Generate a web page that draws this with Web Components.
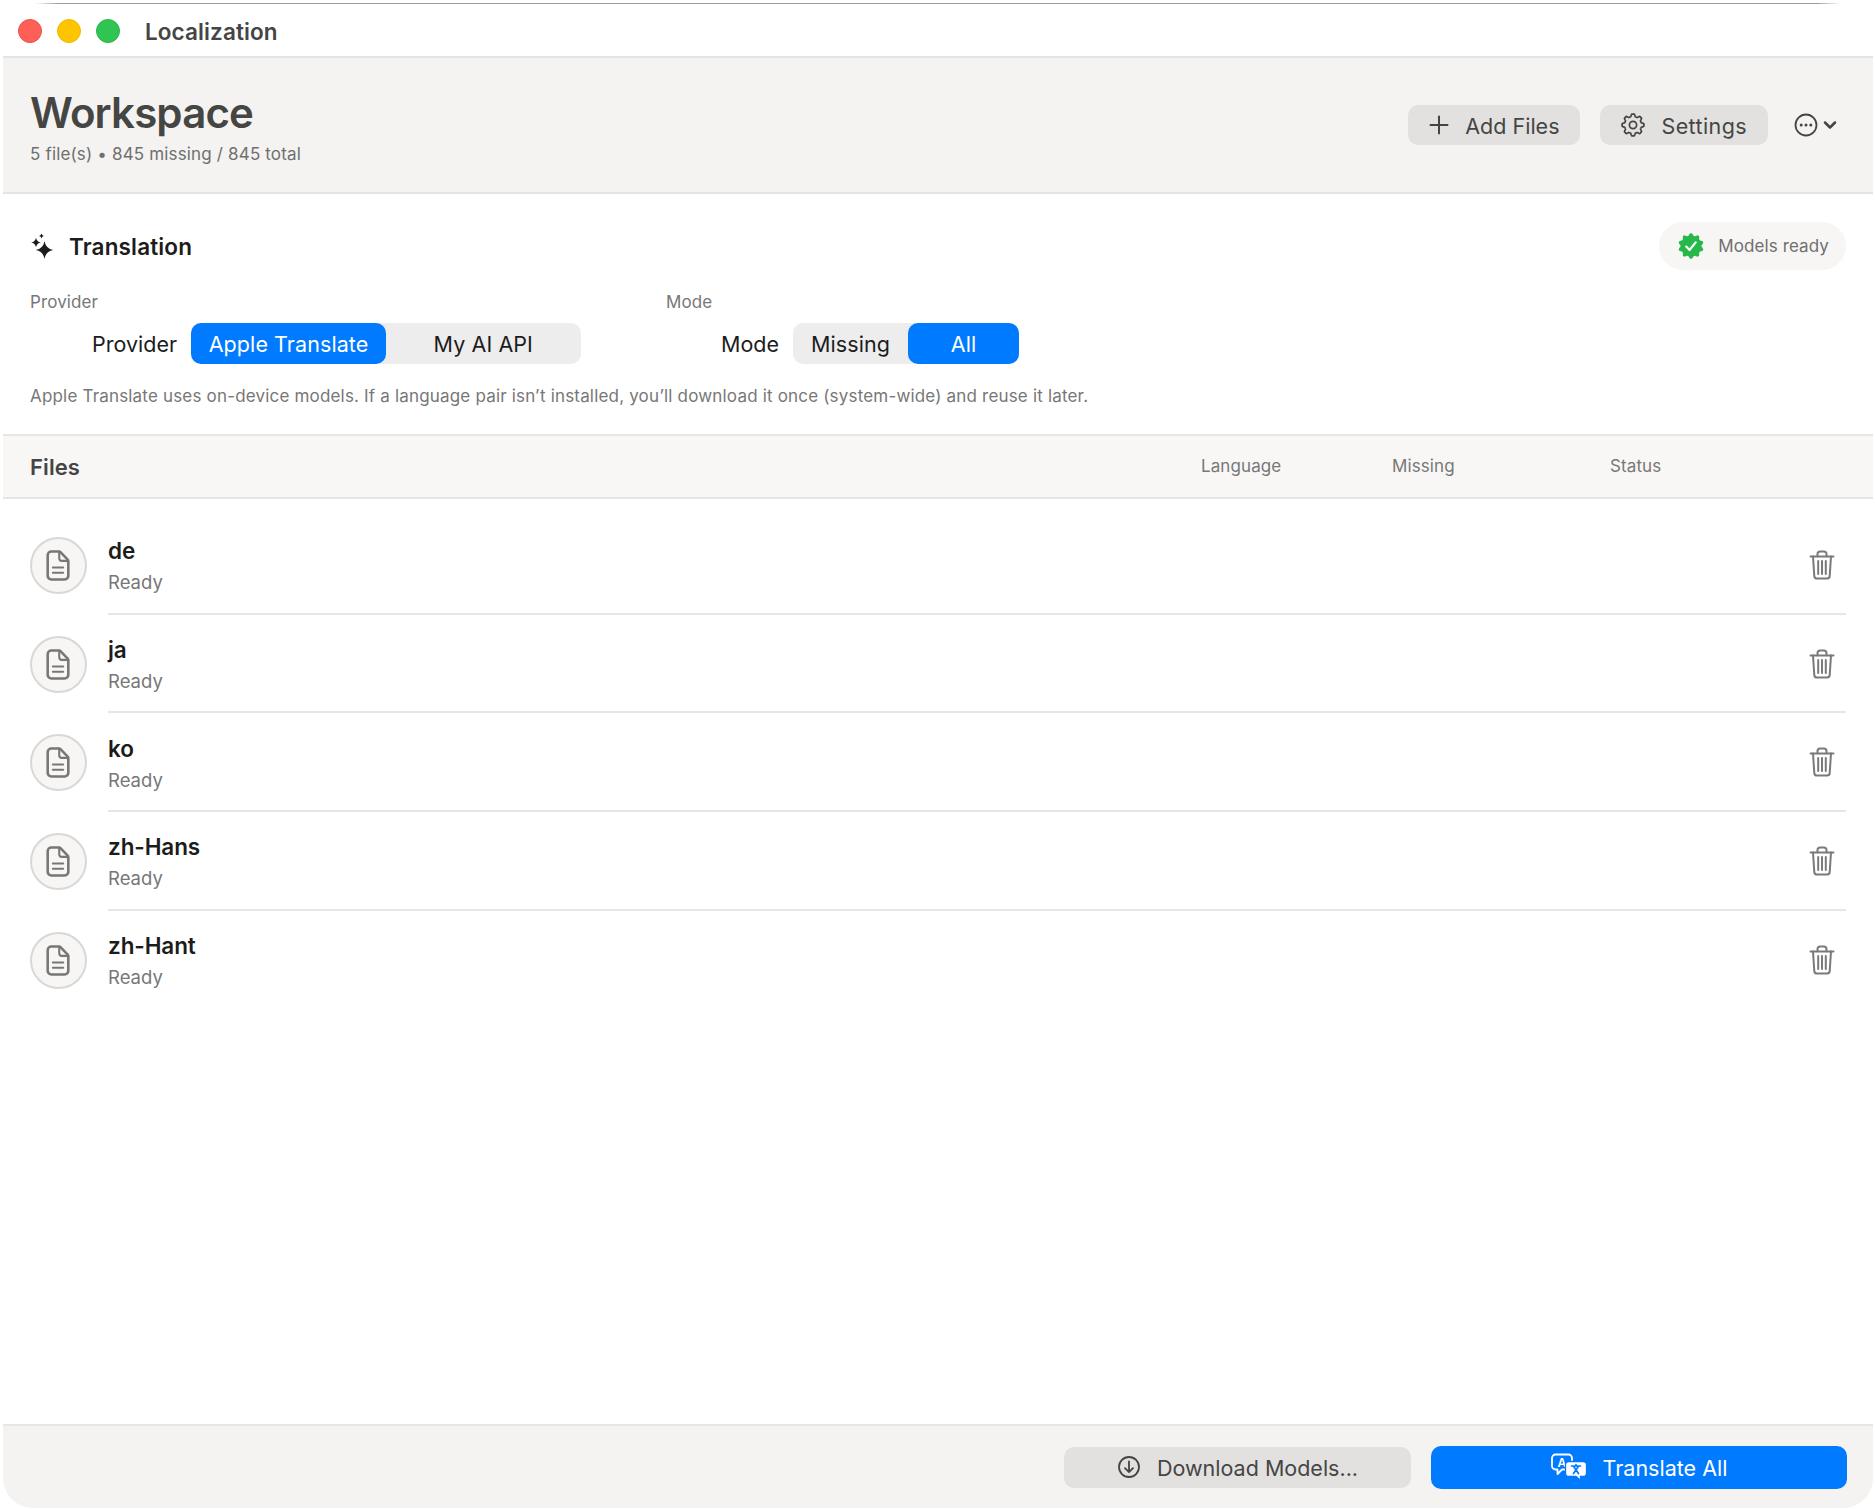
<!DOCTYPE html>
<html lang="en">
<head>
<meta charset="utf-8">
<title>Localization</title>
<style>
  html, body { margin: 0; padding: 0; background: #fff; }
  body { font-family: Inter, "Liberation Sans", sans-serif; }
</style>
</head>
<body>
<app-window>
  <title-bar slot="title">Localization</title-bar>
  <workspace-header slot="header" heading="Workspace" sub="5 file(s) • 845 missing / 845 total">
    <tool-button style="--h:40px"><ui-icon slot="icon" name="plus"></ui-icon>Add Files</tool-button>
    <tool-button style="--h:40px;letter-spacing:0.4px"><ui-icon slot="icon" name="gear"></ui-icon>Settings</tool-button>
    <more-menu></more-menu>
  </workspace-header>
  <translation-panel slot="panel">
    <seg-control slot="provider" field="Provider" label="Provider" pad="62" cols="195px 194.500px">
      <seg-item active>Apple Translate</seg-item>
      <seg-item>My AI API</seg-item>
    </seg-control>
    <seg-control slot="mode" field="Mode" label="Mode" pad="55" cols="115px 111px">
      <seg-item>Missing</seg-item>
      <seg-item active>All</seg-item>
    </seg-control>
    Apple Translate uses on-device models. If a language pair isn’t installed, you’ll download it once (system-wide) and reuse it later.
  </translation-panel>
  <files-header slot="files-header"></files-header>
  <file-row name="de"></file-row>
  <file-row name="ja"></file-row>
  <file-row name="ko"></file-row>
  <file-row name="zh-Hans"></file-row>
  <file-row name="zh-Hant" last></file-row>
  <bottom-bar slot="footer">
    <tool-button style="width:347px;--h:41px"><ui-icon slot="icon" name="download"></ui-icon>Download Models...</tool-button>
    <tool-button primary style="width:416px;--h:43px"><ui-icon slot="icon" name="translate"></ui-icon>Translate All</tool-button>
  </bottom-bar>
</app-window>

<script>
// wavy circle outline, used for the gear and the verified seal
function wavyPath(cx, cy, r, amp, lobes, sharp) {
  let d = '';
  const steps = 160;
  for (let i = 0; i < steps; i++) {
    const t = (i / steps) * Math.PI * 2;
    const c = Math.max(-1, Math.min(1, Math.cos(lobes * t) * sharp));
    const rr = r + amp * c;
    d += (i ? 'L' : 'M') + (cx + rr * Math.sin(t)).toFixed(2) + ' ' + (cy - rr * Math.cos(t)).toFixed(2);
  }
  return d + 'Z';
}

function star(cx, cy, r) {
  const k = r * 0.16;
  return `M${cx} ${cy - r}Q${cx + k} ${cy - k} ${cx + r} ${cy}Q${cx + k} ${cy + k} ${cx} ${cy + r}Q${cx - k} ${cy + k} ${cx - r} ${cy}Q${cx - k} ${cy - k} ${cx} ${cy - r}Z`;
}

const ICONS = {
  plus: `<svg width="20" height="20" viewBox="0 0 20 20" fill="none" stroke="#444" stroke-width="2" stroke-linecap="round"><path d="M10 1.5v17M1.5 10h17"/></svg>`,
  gear: `<svg width="24" height="24" viewBox="0 0 24 24" fill="none" stroke="#444" stroke-width="1.7" stroke-linejoin="round"><path d="${wavyPath(12, 12, 9.7, 1.2, 8, 1.8)}"/><circle cx="12" cy="12" r="3.6"/></svg>`,
  sparkle: `<svg width="24" height="26" viewBox="0 0 24 26" fill="#1c1c1c"><path d="${star(14.5, 17, 8.7)}"/><path d="${star(6, 9.5, 4.8)}"/><path d="${star(11.5, 3, 2.4)}"/></svg>`,
  seal: `<svg width="26" height="26" viewBox="0 0 26 26"><path d="${wavyPath(13, 13, 11.6, 1.1, 10, 1.2)}" fill="#27b84c"/><path d="M8.2 13.6l3.3 3.4 6.2-7.6" fill="none" stroke="#fff" stroke-width="2.2" stroke-linecap="round" stroke-linejoin="round"/></svg>`,
  file: `<svg width="28" height="33" viewBox="0 0 26 32" fill="none" stroke="#777" stroke-width="2.5" stroke-linejoin="round" stroke-linecap="round"><path d="M6.5 2.5h7.5a2 2 0 0 1 1.4.6l7 7.3a2 2 0 0 1 .6 1.4V26a3.5 3.5 0 0 1-3.5 3.5h-13A3.5 3.5 0 0 1 3 26V6a3.5 3.5 0 0 1 3.5-3.5z"/><path d="M14.2 2.8V9a2.5 2.5 0 0 0 2.5 2.5h6" stroke-width="2"/><path d="M8 18h10M8 23h10" stroke-width="2"/></svg>`,
  trash: `<svg width="26" height="30" viewBox="0 0 26 30" fill="none" stroke="#7a7a7a" stroke-width="2" stroke-linecap="round" stroke-linejoin="round"><path d="M1.5 6.5h23"/><path d="M8.5 6.2V4a2.6 2.6 0 0 1 2.6-2.6h3.8A2.6 2.6 0 0 1 17.5 4v2.2"/><path d="M4 6.5l1.3 19.6a2.6 2.6 0 0 0 2.6 2.4h10.2a2.6 2.6 0 0 0 2.6-2.4L22 6.5"/><path d="M9.2 11v13M13 11v13M16.8 11v13"/></svg>`,
  download: `<svg width="24" height="24" viewBox="0 0 24 24" fill="none" stroke="#444" stroke-width="1.8" stroke-linecap="round" stroke-linejoin="round"><circle cx="12" cy="12" r="10"/><path d="M12 6.5v10.5M8 13.2l4 4 4-4"/></svg>`,
  translate: `<svg width="36" height="28" viewBox="0 0 36 28"><path d="M4.5 1.5h13a3.5 3.5 0 0 1 3.5 3.5v8a3.5 3.5 0 0 1-3.5 3.5H11L6.5 21v-4.5h-2A3.5 3.5 0 0 1 1 13V5a3.5 3.5 0 0 1 3.5-3.5z" fill="#007aff" stroke="#fff" stroke-width="1.8" stroke-linejoin="round"/><text x="10.8" y="13.5" font-family="Inter, sans-serif" font-size="12" font-weight="600" fill="#fff" text-anchor="middle">A</text><path d="M18 8.5h14a3.5 3.5 0 0 1 3.5 3.5v8a3.5 3.5 0 0 1-3.5 3.5h-2.5v4L25 23.500h-7A3.5 3.5 0 0 1 14.500 20v-8A3.500 3.500 0 0 1 18 8.500z" fill="#fff" stroke="#007aff" stroke-width="1.300"/><path d="M20.500 13h9M25 11.500V13M22.500 20.500l5-7.200M27.500 20.500l-5-7.200" fill="none" stroke="#007aff" stroke-width="1.700" stroke-linecap="round"/></svg>`
};

class UiIcon extends HTMLElement {
  connectedCallback() {
    this.attachShadow({ mode: 'open' });
    this.shadowRoot.innerHTML = `
      <style>
        :host { display: inline-flex; align-items: center; justify-content: center; flex: none; }
        svg { display: block; }
      </style>
      ${ICONS[this.getAttribute('name')] || ''}
    `;
  }
}

class AppWindow extends HTMLElement {
  connectedCallback() {
    this.attachShadow({ mode: 'open' });
    this.shadowRoot.innerHTML = `
      <style>
        :host {
          display: flex;
          flex-direction: column;
          box-sizing: border-box;
          width: 1870px;
          height: 1505px;
          margin: 3px 0 0 3px;
          background: #fff;
          border-radius: 30px;
          overflow: hidden;
          font-family: Inter, "Liberation Sans", sans-serif;
        }
        .topline {
          height: 1px; margin: 0 32px 1px; flex: none;
          background: linear-gradient(to right, #fff, #9c9c9c 24px, #9c9c9c calc(100% - 24px), #fff);
        }
        .list { flex: 1; padding: 17px 27px 0 27px; display: flex; flex-direction: column; }
      </style>
      <div class="topline"></div>
      <slot name="title"></slot>
      <slot name="header"></slot>
      <slot name="panel"></slot>
      <slot name="files-header"></slot>
      <div class="list"><slot></slot></div>
      <slot name="footer"></slot>
    `;
  }
}

class TitleBar extends HTMLElement {
  connectedCallback() {
    this.attachShadow({ mode: 'open' });
    this.shadowRoot.innerHTML = `
      <style>
        :host {
          display: flex;
          align-items: center;
          height: 51px;
          flex: none;
          padding-left: 15px;
          color: #454545;
          font-size: 22.500px;
          font-weight: 600;
        }
        .dot { width: 24px; height: 24px; border-radius: 50%; margin-right: 15px; box-sizing: border-box; }
        .r { background: #fe5f57; border: 1px solid #ee4e48; }
        .y { background: #fdc500; border: 1px solid #f0b800; }
        .g { background: #30c553; border: 1px solid #28b548; }
        .t { margin-left: 10px; padding-top: 2px; letter-spacing: 0.1px; }
      </style>
      <span class="dot r"></span><span class="dot y"></span><span class="dot g"></span>
      <span class="t"><slot></slot></span>
    `;
  }
}

class WorkspaceHeader extends HTMLElement {
  connectedCallback() {
    this.attachShadow({ mode: 'open' });
    this.shadowRoot.innerHTML = `
      <style>
        :host {
          display: flex;
          align-items: center;
          justify-content: space-between;
          box-sizing: border-box;
          height: 138px;
          flex: none;
          padding: 0 36px 0 27px;
          background: #f4f3f2;
          border-top: 2px solid #e4e4e3;
          border-bottom: 2px solid #e4e4e3;
        }
        h1 { margin: 0; font-size: 42px; line-height: 50px; font-weight: 600; color: #454543; letter-spacing: -0.85px; }
        p { margin: 5px 0 0; font-size: 17px; line-height: 22px; color: #6f6f6f; letter-spacing: 0.16px; }
        .actions { display: flex; align-items: center; gap: 20px; }
        .head { margin-top: 2px; }
      </style>
      <div class="head">
        <h1>${this.getAttribute('heading')}</h1>
        <p>${this.getAttribute('sub')}</p>
      </div>
      <div class="actions"><slot></slot></div>
    `;
  }
}

class ToolButton extends HTMLElement {
  connectedCallback() {
    this.attachShadow({ mode: 'open' });
    this.shadowRoot.innerHTML = `
      <style>
        :host {
          display: inline-flex;
          align-items: center;
          justify-content: center;
          gap: 16px;
          box-sizing: border-box;
          height: var(--h, 40px);
          padding: 0 21px;
          border-radius: 10px;
          background: #e2e1df;
          color: #454545;
          font-size: 21.500px;
          flex: none;
        }
        :host([primary]) { background: #007aff; color: #fff; }
        span { display: block; padding-top: 2px; }
      </style>
      <slot name="icon"></slot><span><slot></slot></span>
    `;
  }
}

class MoreMenu extends HTMLElement {
  connectedCallback() {
    this.attachShadow({ mode: 'open' });
    this.shadowRoot.innerHTML = `
      <style>
        :host { display: inline-flex; align-items: center; gap: 5px; margin-left: 6px; }
        svg { display: block; }
      </style>
      <svg width="24" height="24" viewBox="0 0 24 24" fill="none" stroke="#444" stroke-width="1.800"><circle cx="12" cy="12" r="10.500"/><g fill="#444" stroke="none"><circle cx="7.200" cy="12" r="1.500"/><circle cx="12" cy="12" r="1.500"/><circle cx="16.800" cy="12" r="1.500"/></g></svg>
      <svg width="14" height="10" viewBox="0 0 14 10" fill="none" stroke="#444" stroke-width="2.500" stroke-linecap="round" stroke-linejoin="round"><path d="M2 2.500l5 5 5-5"/></svg>
    `;
  }
}

class TranslationPanel extends HTMLElement {
  connectedCallback() {
    this.attachShadow({ mode: 'open' });
    this.shadowRoot.innerHTML = `
      <style>
        :host {
          display: block;
          box-sizing: border-box;
          height: 240px;
          flex: none;
          padding: 28px 27px 0 27px;
        }
        .top { display: flex; align-items: center; justify-content: space-between; height: 48px; }
        .title { display: flex; align-items: center; gap: 15px; font-size: 22.500px; font-weight: 600; color: #1c1c1c; letter-spacing: 0.15px; }
        .badge {
          display: flex; align-items: center; gap: 14px;
          height: 48px; padding: 0 17px 0 19px;
          border-radius: 24px; background: #f7f6f5;
          font-size: 17px; color: #6f6f6f; letter-spacing: 0.1px;
        }
        .fields { display: grid; grid-template-columns: 636px 1fr; margin-top: 21px; }
        .help { margin-top: 21px; font-size: 17px; line-height: 22px; color: #777; letter-spacing: 0.18px; }
      </style>
      <div class="top">
        <div class="title"><ui-icon name="sparkle"></ui-icon><span>Translation</span></div>
        <div class="badge"><ui-icon name="seal"></ui-icon><span>Models ready</span></div>
      </div>
      <div class="fields">
        <slot name="provider"></slot>
        <slot name="mode"></slot>
      </div>
      <div class="help"><slot></slot></div>
    `;
  }
}

class SegControl extends HTMLElement {
  connectedCallback() {
    const pad = this.getAttribute('pad');
    const cols = this.getAttribute('cols');
    this.attachShadow({ mode: 'open' });
    this.shadowRoot.innerHTML = `
      <style>
        :host { display: block; }
        .field { font-size: 17px; line-height: 22px; color: #777; letter-spacing: 0.1px; }
        .row { display: flex; align-items: center; gap: 14px; margin-top: 10px; padding-left: ${pad}px; }
        .label { font-size: 21.500px; color: #1c1c1c; }
        .seg { display: grid; grid-template-columns: ${cols}; height: 41px; border-radius: 10px; background: #ededed; }
      </style>
      <div class="field">${this.getAttribute('field')}</div>
      <div class="row">
        <span class="label">${this.getAttribute('label')}</span>
        <div class="seg"><slot></slot></div>
      </div>
    `;
  }
}

class SegItem extends HTMLElement {
  connectedCallback() {
    this.attachShadow({ mode: 'open' });
    this.shadowRoot.innerHTML = `
      <style>
        :host {
          display: flex; align-items: center; justify-content: center;
          border-radius: 10px;
          font-size: 21.500px; color: #1c1c1c;
          letter-spacing: 0.08px;
        }
        :host([active]) { background: #007aff; color: #fff; }
      </style>
      <slot></slot>
    `;
  }
}

class FilesHeader extends HTMLElement {
  connectedCallback() {
    this.attachShadow({ mode: 'open' });
    this.shadowRoot.innerHTML = `
      <style>
        :host {
          display: grid;
          grid-template-columns: 1171px 191px 218px 1fr;
          align-items: center;
          box-sizing: border-box;
          height: 65px;
          flex: none;
          padding-left: 27px;
          background: #f8f7f6;
          border-top: 2px solid #e6e6e5;
          border-bottom: 2px solid #e6e6e5;
          font-size: 17px;
          color: #777;
          letter-spacing: 0.1px;
        }
        b { font-size: 22px; font-weight: 600; color: #454545; }
        span { margin-top: -2px; }
      </style>
      <b>Files</b><span>Language</span><span>Missing</span><span>Status</span>
    `;
  }
}

class FileRow extends HTMLElement {
  connectedCallback() {
    this.attachShadow({ mode: 'open' });
    this.shadowRoot.innerHTML = `
      <style>
        :host { display: flex; align-items: stretch; gap: 21px; height: 98.700px; flex: none; }
        .circle {
          align-self: center;
          width: 57px; height: 57px; flex: none;
          box-sizing: border-box;
          display: flex; align-items: center; justify-content: center;
          border-radius: 50%;
          background: #f7f6f5;
          border: 2px solid #d9d8d6;
        }
        .circle ui-icon { margin-right: 1px; }
        .body {
          flex: 1;
          display: flex; align-items: center; justify-content: space-between;
          box-sizing: border-box;
          padding-top: 4px;
          border-bottom: 2px solid #e6e6e5;
        }
        :host([last]) .body { border-bottom-color: transparent; }
        .name { font-size: 22.500px; line-height: 30px; font-weight: 600; color: #1c1c1c; letter-spacing: -0.1px; }
        .state { margin-top: 2px; font-size: 18.500px; line-height: 28px; color: #777; }
        .trash { margin-right: 11px; margin-bottom: 3px; }
      </style>
      <div class="circle"><ui-icon name="file"></ui-icon></div>
      <div class="body">
        <div>
          <div class="name">${this.getAttribute('name')}</div>
          <div class="state">Ready</div>
        </div>
        <ui-icon class="trash" name="trash"></ui-icon>
      </div>
    `;
  }
}

class BottomBar extends HTMLElement {
  connectedCallback() {
    this.attachShadow({ mode: 'open' });
    this.shadowRoot.innerHTML = `
      <style>
        :host {
          display: flex;
          align-items: center;
          justify-content: flex-end;
          gap: 20px;
          box-sizing: border-box;
          height: 84px;
          flex: none;
          padding: 0 26px 0 0;
          background: #f4f3f2;
          border-top: 2px solid #e6e6e5;
        }
      </style>
      <slot></slot>
    `;
  }
}

customElements.define('ui-icon', UiIcon);
customElements.define('app-window', AppWindow);
customElements.define('title-bar', TitleBar);
customElements.define('workspace-header', WorkspaceHeader);
customElements.define('tool-button', ToolButton);
customElements.define('more-menu', MoreMenu);
customElements.define('translation-panel', TranslationPanel);
customElements.define('seg-control', SegControl);
customElements.define('seg-item', SegItem);
customElements.define('files-header', FilesHeader);
customElements.define('file-row', FileRow);
customElements.define('bottom-bar', BottomBar);
</script>
</body>
</html>
